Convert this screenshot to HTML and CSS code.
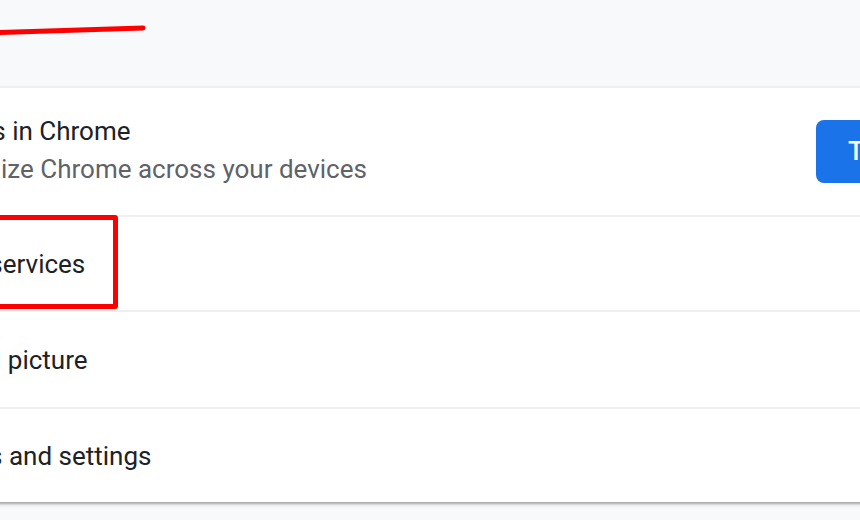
FILE: index.html
```html
<!DOCTYPE html>
<html lang="en">
<head>
<meta charset="utf-8">
<title>Settings</title>
<link rel="stylesheet" href="styles.css">
</head>
<body>
<div class="page">
  <div class="header"></div>
  <div class="card">
    <div class="row row-tall">
      <div class="text">
        <div class="title">Get Google smarts in Chrome</div>
        <div class="subtitle">Sync and personalize Chrome across your devices</div>
      </div>
      <button class="primary">Turn on sync...</button>
    </div>
    <div class="row">
      <div class="title">Sync and Google services</div>
    </div>
    <div class="row row-mid">
      <div class="title">Chrome name and picture</div>
    </div>
    <div class="row">
      <div class="title">Import bookmarks and settings</div>
    </div>
  </div>
</div>
<svg class="mark-line" width="160" height="50" viewBox="0 0 160 50">
  <path d="M-4 32.5 L143 28" stroke="#ff0000" stroke-width="5" stroke-linecap="round" fill="none"/>
</svg>
<div class="mark-box"></div>
</body>
</html>
```

FILE: styles.css
```css
html, body {
  margin: 0;
  padding: 0;
}
body {
  width: 860px;
  height: 520px;
  overflow: hidden;
  background: #f8f9fa;
  font-family: Roboto, "Liberation Sans", Arial, sans-serif;
  position: relative;
}
.page {
  margin-left: -251px;
  width: 1342px;
}
.header {
  height: 86px;
}
.card {
  background: #ffffff;
  border-top: 2px solid #eceef1;
  box-shadow: 0 2px 2px rgba(60, 64, 67, 0.35), 0 3px 4px rgba(60, 64, 67, 0.12);
  padding: 0 40px;
}
.row {
  display: flex;
  align-items: center;
  justify-content: space-between;
  height: 93px;
  border-top: 2px solid #eeeff1;
}
.row:first-child {
  border-top: none;
}
.row-tall {
  height: 127px;
}
.row-mid {
  height: 95px;
}
.title {
  font-size: 26px;
  line-height: 38px;
  color: #202124;
}
.subtitle {
  font-size: 26px;
  line-height: 38px;
  color: #5f6368;
}
.text {
  margin-top: -4px;
}
.primary {
  font-family: Roboto, "Liberation Sans", Arial, sans-serif;
  font-size: 26px;
  font-weight: 500;
  color: #ffffff;
  background: #1a73e8;
  border: none;
  border-radius: 8px;
  height: 63px;
  padding: 0 32px;
  margin-top: -1px;
  white-space: nowrap;
}
.mark-line {
  position: absolute;
  left: 0;
  top: 0;
}
.mark-box {
  position: absolute;
  left: -20px;
  top: 215px;
  width: 128px;
  height: 84px;
  border: 5px solid #ff0000;
  border-radius: 3px;
}
```
